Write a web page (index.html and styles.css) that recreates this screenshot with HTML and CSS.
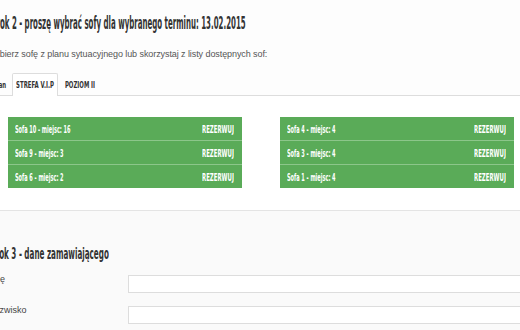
FILE: index.html
```html
<!DOCTYPE html>
<html lang="pl">
<head>
<meta charset="utf-8">
<link rel="stylesheet" href="styles.css">
</head>
<body>
<div class="page">
  <section class="step">
    <h2 class="step-title"><span class="cond">Krok 2 - proszę wybrać sofy dla wybranego terminu: 13.02.2015</span></h2>
    <p class="intro">Wybierz sofę z planu sytuacyjnego lub skorzystaj z listy dostępnych sof:</p>
    <ul class="tabs">
      <li class="tab tab-plan"><span class="cond">Plan</span></li>
      <li class="tab tab-vip active"><span class="cond">STREFA V.I.P</span></li>
      <li class="tab tab-level"><span class="cond">POZIOM II</span></li>
    </ul>
    <div class="tab-panel">
      <ul class="sofa-list">
        <li class="sofa"><span class="cond">Sofa 10 - miejsc: 16</span><span class="cond right">REZERWUJ</span></li>
        <li class="sofa"><span class="cond">Sofa 9 - miejsc: 3</span><span class="cond right">REZERWUJ</span></li>
        <li class="sofa"><span class="cond">Sofa 6 - miejsc: 2</span><span class="cond right">REZERWUJ</span></li>
      </ul>
      <ul class="sofa-list">
        <li class="sofa"><span class="cond">Sofa 4 - miejsc: 4</span><span class="cond right">REZERWUJ</span></li>
        <li class="sofa"><span class="cond">Sofa 3 - miejsc: 4</span><span class="cond right">REZERWUJ</span></li>
        <li class="sofa"><span class="cond">Sofa 1 - miejsc: 4</span><span class="cond right">REZERWUJ</span></li>
      </ul>
    </div>
  </section>
  <section class="step step-form">
    <h3 class="step-title small"><span class="cond">Krok 3 - dane zamawiającego</span></h3>
    <div class="form-row"><label class="label">Imię</label><input class="input" type="text"></div>
    <div class="form-row"><label class="label">Nazwisko</label><input class="input" type="text"></div>
  </section>
</div>
</body>
</html>
```
FILE: styles.css
```css
html, body {
  margin: 0;
  padding: 0;
  background: #fdfdfd;
  overflow: hidden;
}
.page {
  width: 520px;
  height: 330px;
  overflow: hidden;
}
.cond {
  display: inline-block;
  transform-origin: 0 50%;
  white-space: nowrap;
}
.step-title {
  font-family: "DejaVu Sans Condensed", "DejaVu Sans", sans-serif;
  font-weight: 700;
  font-size: 17px;
  color: #333;
  margin: 0 0 0 -9px;
  padding-top: 12px;
  line-height: 22px;
  white-space: nowrap;
}
.step-title .cond {
  transform: scaleX(0.46);
}
.intro {
  font-family: "Liberation Sans", Arial, sans-serif;
  font-size: 9px;
  letter-spacing: -0.08px;
  color: #555;
  margin: 14px 0 0 -13px;
  line-height: 12px;
  white-space: nowrap;
}
.tabs {
  list-style: none;
  margin: 13px 0 0 -12px;
  padding: 0;
  display: flex;
  border-bottom: 1px solid #ddd;
  height: 22px;
}
.tab {
  font-family: "DejaVu Sans Condensed", "DejaVu Sans", sans-serif;
  font-weight: 700;
  font-size: 9.5px;
  color: #333;
  line-height: 22px;
  height: 22px;
  border: 1px solid transparent;
  border-bottom: none;
  box-sizing: border-box;
  display: flex;
  justify-content: center;
  overflow: visible;
}
.tab .cond {
  transform: scaleX(0.63);
  transform-origin: 50% 50%;
}
.tab-plan { width: 24px; }
.tab-vip { width: 46px; }
.tab-level { width: 43px; }
.tab.active {
  background: #fff;
  border-color: #ddd;
  border-radius: 2px 2px 0 0;
  height: 23px;
}
.tab-panel {
  background: #fff;
  display: grid;
  grid-template-columns: 234px 234px;
  column-gap: 38px;
  padding: 21px 0 22px 8px;
  border-bottom: 1px solid #e4e4e4;
}
.sofa-list {
  list-style: none;
  margin: 0;
  padding: 0;
  background: #5aab58;
}
.sofa {
  display: flex;
  justify-content: space-between;
  align-items: center;
  height: 23px;
  padding: 0 8px 0 7px;
  border-top: 1px solid #8cc68a;
  font-family: "DejaVu Sans Condensed", "DejaVu Sans", sans-serif;
  font-weight: 700;
  font-size: 10.5px;
  color: #fff;
}
.sofa .cond {
  transform: scaleX(0.53);
}
.sofa .cond.right {
  transform: scaleX(0.57);
  transform-origin: 100% 50%;
}
.sofa:first-child {
  border-top: none;
}
.step-form {
  background: #fafafa;
  padding-top: 22px;
  height: 200px;
}
.step-title.small {
  font-size: 16px;
  padding-top: 10px;
  margin-left: -10px;
}
.step-title.small .cond {
  transform: scaleX(0.5);
}
.form-row {
  display: flex;
  align-items: center;
  margin: 10px 0 0 -12px;
}
.form-row + .form-row {
  margin-top: 13px;
}
.label {
  flex: none;
  width: 140px;
  font-family: "Liberation Sans", Arial, sans-serif;
  font-size: 9px;
  color: #444;
  margin-top: -10px;
}
.input {
  flex: none;
  width: 420px;
  height: 18px;
  box-sizing: border-box;
  border: 1px solid #ddd;
  background: #fff;
  padding: 0;
  margin: 0;
}
```
